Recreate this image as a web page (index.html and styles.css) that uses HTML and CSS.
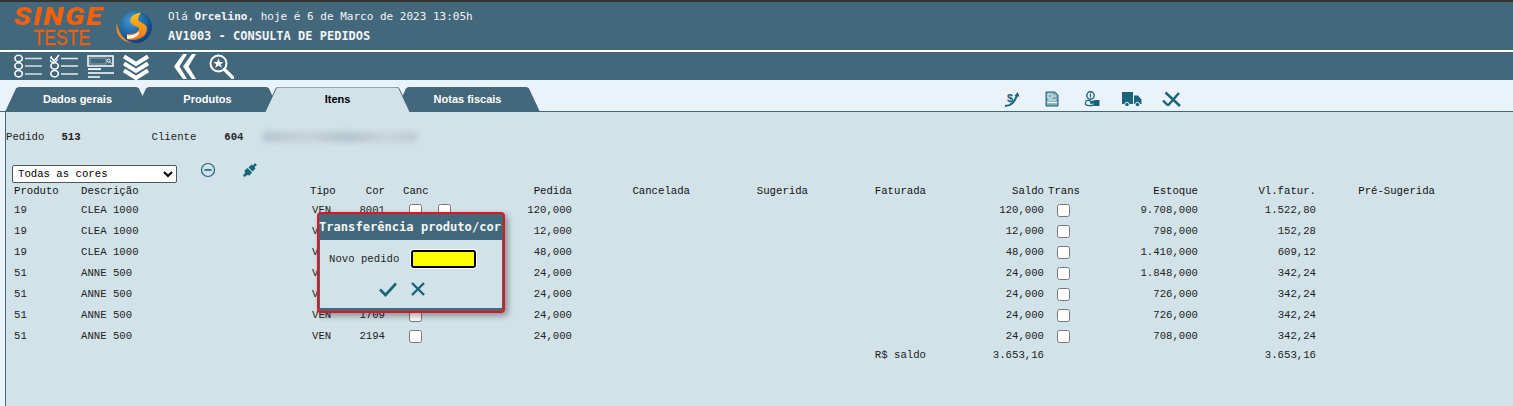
FILE: index.html
```html
<!DOCTYPE html>
<html lang="pt-BR">
<head>
    <meta charset="UTF-8">
    <title>AV1003 - Consulta de Pedidos</title>
    <link rel="stylesheet" href="styles.css">
</head>
<body>

    <header class="top-bar">
        <div class="brand">
            <span class="brand-name">SINGE</span>
            <span class="brand-env">TESTE</span>
        </div>
        <svg class="brand-ball" viewBox="0 0 38 32" width="38" height="32">
            <defs>
                <radialGradient id="ballBlue" cx="35%" cy="30%" r="75%">
                    <stop offset="0" stop-color="#3f9ad6"/>
                    <stop offset="1" stop-color="#0b3f78"/>
                </radialGradient>
                <linearGradient id="ballOrange" x1="0" y1="0" x2="0" y2="1">
                    <stop offset="0" stop-color="#ffc21a"/>
                    <stop offset="1" stop-color="#f0701a"/>
                </linearGradient>
            </defs>
            <circle cx="21" cy="16" r="16" fill="url(#ballBlue)"/>
            <path d="M2 12 C-1 22 6 31 17 32 C9 29 3 22 2 12Z" fill="#e8892a"/>
            <path d="M26 1.5 C19 2 13 7 16 12 C18 16 24 15 24 18 C24 22 18 23 12 23 L12 28 C22 31 32 26 32 18 C32 12 24 12 23 9 C23 6 25 3 26 1.5Z" fill="url(#ballOrange)"/>
            <path d="M12 24 C16 25 21 24 24 20 C25 24 20 28 12 28Z" fill="#f7f7f7"/>
        </svg>
        <div class="greeting">
            <p class="greeting-line">Olá <strong>Orcelino</strong>, hoje é 6 de Marco de 2023 13:05h</p>
            <p class="page-title">AV1003 - CONSULTA DE PEDIDOS</p>
        </div>
    </header>

    <nav class="toolbar">
        <svg class="tool" viewBox="0 0 28 25" width="28" height="25">
            <g fill="none" stroke="#fff" stroke-width="1.6">
                <ellipse cx="4.6" cy="4.5" rx="3.7" ry="3.2"/>
                <ellipse cx="4.6" cy="12" rx="3.7" ry="3.2"/>
                <ellipse cx="4.6" cy="19.7" rx="3.7" ry="3.2"/>
            </g>
            <path d="M11 4.5H28M11 12H28M11 20H28" stroke="#d5dde1" stroke-width="1.3"/>
        </svg>
        <svg class="tool tool-checks" viewBox="0 0 28 25" width="28" height="25">
            <g fill="none" stroke="#fff" stroke-width="1.6">
                <path d="M1 3 L4 7 L9 1" stroke-width="1.5"/>
                <path d="M7 4.5 A3.7 3 0 1 1 2 2.5" stroke-width="1.2"/>
                <ellipse cx="4.6" cy="12" rx="3.7" ry="3.2"/>
                <ellipse cx="4.6" cy="19.7" rx="3.7" ry="3.2"/>
            </g>
            <path d="M11 4.5H28M11 12H28M11 20H28" stroke="#e4eaed" stroke-width="1.3"/>
        </svg>
        <svg class="tool" viewBox="0 0 27 25" width="27" height="25">
            <rect x="1" y="2" width="25" height="10" fill="none" stroke="#fff" stroke-width="1.5"/>
            <rect x="3" y="4" width="16" height="6" fill="#44687b" stroke="#b9c7ce" stroke-width=".6"/>
            <circle cx="21.5" cy="6.6" r="1.6" fill="none" stroke="#fff"/>
            <path d="M22.6 7.8L24.4 9.6" stroke="#fff"/>
            <path d="M1 15.2H14M1 19H27M1 23H13" stroke="#fff" stroke-width="1.7"/>
        </svg>
        <svg class="tool tool-chevrons" viewBox="0 0 26 26" width="26" height="26">
            <path d="M1 2.5L13 10L25 2.5M1 9.5L13 17L25 9.5M1 16.5L13 24L25 16.5" fill="none" stroke="#fff" stroke-width="4"/>
        </svg>
        <svg class="tool tool-back" viewBox="0 0 22 25" width="22" height="25">
            <path d="M9 0L0 12.5L9 25H13L5.5 12.5L13 0ZM18 0L9 12.5L18 25H22L14.5 12.5L22 0Z" fill="#fff"/>
        </svg>
        <svg class="tool tool-search" viewBox="0 0 25 25" width="25" height="25">
            <circle cx="9.5" cy="9.5" r="8" fill="none" stroke="#fff" stroke-width="2"/>
            <path d="M9.5 4.5L11 8H14.5L11.7 10.2L12.8 13.8L9.5 11.6L6.2 13.8L7.3 10.2L4.5 8H8Z" fill="#fff"/>
            <path d="M15.5 15.5L23.5 23.5" stroke="#fff" stroke-width="3.2" stroke-linecap="round"/>
        </svg>
    </nav>

    <div class="tab-bar">
        <div class="tabs">
            <a class="tab"><svg viewBox="0 0 145 25"><path d="M0 25L11 1.5Q12 0 14 0H131Q133 0 134 1.5L145 25"/></svg><span>Dados gerais</span></a>
            <a class="tab"><svg viewBox="0 0 145 25"><path d="M0 25L11 1.5Q12 0 14 0H131Q133 0 134 1.5L145 25"/></svg><span>Produtos</span></a>
            <a class="tab tab-active"><svg viewBox="0 0 145 25"><path d="M0 25L11 1.5Q12 0 14 0H131Q133 0 134 1.5L145 25"/></svg><span>Itens</span></a>
            <a class="tab"><svg viewBox="0 0 145 25"><path d="M0 25L11 1.5Q12 0 14 0H131Q133 0 134 1.5L145 25"/></svg><span>Notas fiscais</span></a>
        </div>
        <div class="tab-actions">
            <svg viewBox="0 0 20 20" width="20" height="20">
                <path d="M3 17C9 17 13 13 15 6" fill="none" stroke="#1a6478" stroke-width="2"/>
                <path d="M12.5 7L15.6 3L17.5 7.6Z" fill="#1a6478"/>
                <text x="5" y="13" class="money">$</text>
            </svg>
            <svg viewBox="0 0 20 20" width="20" height="20">
                <path d="M4 3H13L16 6V17H4Z" fill="#7fa9b6" stroke="#1a6478" stroke-width="1"/>
                <path d="M6 5H10V9H6ZM11 7H14M6 11H14" stroke="#e9f3f9" fill="none"/>
                <path d="M5 13.5H15" stroke="#e9f3f9" stroke-width="1.4"/>
            </svg>
            <svg viewBox="0 0 20 20" width="20" height="20">
                <circle cx="8.5" cy="6.5" r="3.7" fill="none" stroke="#1a6478" stroke-width="1.4"/>
                <path d="M8.5 4.5V8.5" stroke="#1a6478" stroke-width="1.2"/>
                <path d="M3.5 12.5C5 11 7 11 9 12.5H12V14H8M3.5 13V15.5C5 16.5 8 17 12 16" fill="none" stroke="#1a6478" stroke-width="1.3"/>
                <rect x="12" y="11" width="5.5" height="6" fill="#1a6478"/>
            </svg>
            <svg viewBox="0 0 20 20" width="20" height="20">
                <path d="M0 3H11V15H0ZM12 6.5H16L19.5 10.5V15H12Z" fill="#1a6478"/>
                <circle cx="5" cy="15.5" r="2.2" fill="#1a6478" stroke="#e9f3f9"/>
                <circle cx="15.5" cy="15.5" r="2.2" fill="#1a6478" stroke="#e9f3f9"/>
            </svg>
            <svg viewBox="0 0 20 20" width="20" height="20">
                <path d="M1 11.5L6 16.5M6 16.5L17 4M3.5 3.5L18 17" fill="none" stroke="#1a6478" stroke-width="2.4"/>
            </svg>
        </div>
    </div>

    <main class="content">
        <div class="order-info">
            <span class="info-label">Pedido</span>
            <strong class="info-order">513</strong>
            <span class="info-label info-client">Cliente</span>
            <strong class="info-code">604</strong>
            <span class="info-blur"></span>
        </div>

        <div class="filter-row">
            <select class="color-select">
                <option>Todas as cores</option>
            </select>
            <svg class="filter-icon" viewBox="0 0 16 16" width="16" height="16">
                <circle cx="8" cy="8" r="6.5" fill="none" stroke="#1a6478" stroke-width="1.2"/>
                <path d="M4.5 8H11.5" stroke="#1a6478" stroke-width="1.6"/>
            </svg>
            <svg class="filter-icon filter-plug" viewBox="0 0 16 16" width="16" height="16">
                <path d="M1 13.5L3 11L2.5 8.5L5.5 6L10 10.5L7.5 13.5L5 13L2.5 15ZM6.5 5.5L9.5 2.5L11 3.5L13 1L15 3L12.5 5L13.5 6.5L10.5 9.5Z" fill="#1a6478"/>
            </svg>
        </div>

        <table class="items">
            <colgroup>
                <col class="c-prod"><col class="c-desc"><col class="c-tipo"><col class="c-cor">
                <col class="c-canc"><col class="c-canc2"><col class="c-ped"><col class="c-num">
                <col class="c-num"><col class="c-num"><col class="c-num"><col class="c-trans">
                <col class="c-ped"><col class="c-num"><col class="c-pre">
            </colgroup>
            <thead>
                <tr>
                    <th>Produto</th><th>Descrição</th><th>Tipo</th><th class="num">Cor</th>
                    <th class="canc-head" colspan="2">Canc</th><th class="num">Pedida</th><th class="num">Cancelada</th>
                    <th class="num">Sugerida</th><th class="num">Faturada</th><th class="num">Saldo</th><th class="trans-head">Trans</th>
                    <th class="num">Estoque</th><th class="num">Vl.fatur.</th><th class="num">Pré-Sugerida</th>
                </tr>
            </thead>
            <tbody>
                <tr>
                    <td>19</td><td>CLEA 1000</td><td class="tipo">VEN</td><td class="num">8001</td>
                    <td class="check-a"><input type="checkbox"></td><td class="check-b"><input type="checkbox"></td>
                    <td class="num">120,000</td><td></td><td></td><td></td><td class="num">120,000</td>
                    <td class="check-t"><input type="checkbox"></td><td class="num">9.708,000</td><td class="num">1.522,80</td><td></td>
                </tr>
                <tr>
                    <td>19</td><td>CLEA 1000</td><td class="tipo">VEN</td><td></td>
                    <td></td><td></td>
                    <td class="num">12,000</td><td></td><td></td><td></td><td class="num">12,000</td>
                    <td class="check-t"><input type="checkbox"></td><td class="num">798,000</td><td class="num">152,28</td><td></td>
                </tr>
                <tr>
                    <td>19</td><td>CLEA 1000</td><td class="tipo">VEN</td><td></td>
                    <td></td><td></td>
                    <td class="num">48,000</td><td></td><td></td><td></td><td class="num">48,000</td>
                    <td class="check-t"><input type="checkbox"></td><td class="num">1.410,000</td><td class="num">609,12</td><td></td>
                </tr>
                <tr>
                    <td>51</td><td>ANNE 500</td><td class="tipo">VEN</td><td></td>
                    <td></td><td></td>
                    <td class="num">24,000</td><td></td><td></td><td></td><td class="num">24,000</td>
                    <td class="check-t"><input type="checkbox"></td><td class="num">1.848,000</td><td class="num">342,24</td><td></td>
                </tr>
                <tr>
                    <td>51</td><td>ANNE 500</td><td class="tipo">VEN</td><td></td>
                    <td></td><td></td>
                    <td class="num">24,000</td><td></td><td></td><td></td><td class="num">24,000</td>
                    <td class="check-t"><input type="checkbox"></td><td class="num">726,000</td><td class="num">342,24</td><td></td>
                </tr>
                <tr>
                    <td>51</td><td>ANNE 500</td><td class="tipo">VEN</td><td class="num">1709</td>
                    <td class="check-a"><input type="checkbox"></td><td></td>
                    <td class="num">24,000</td><td></td><td></td><td></td><td class="num">24,000</td>
                    <td class="check-t"><input type="checkbox"></td><td class="num">726,000</td><td class="num">342,24</td><td></td>
                </tr>
                <tr>
                    <td>51</td><td>ANNE 500</td><td class="tipo">VEN</td><td class="num">2194</td>
                    <td class="check-a"><input type="checkbox"></td><td></td>
                    <td class="num">24,000</td><td></td><td></td><td></td><td class="num">24,000</td>
                    <td class="check-t"><input type="checkbox"></td><td class="num">708,000</td><td class="num">342,24</td><td></td>
                </tr>
                <tr class="total-row">
                    <td colspan="9"></td><td class="num">R$ saldo</td><td class="num">3.653,16</td>
                    <td></td><td></td><td class="num">3.653,16</td><td></td>
                </tr>
            </tbody>
        </table>

        <!-- Transfer dialog -->
        <div class="dialog">
            <div class="dialog-title">Transferência produto/cor</div>
            <div class="dialog-field">
                <label for="novoPedido">Novo pedido</label>
                <span class="field-box"><input type="text" id="novoPedido"></span>
            </div>
            <div class="dialog-actions">
                <svg viewBox="0 0 20 20" width="20" height="20">
                    <path d="M2 10.5L7.5 16L18 4.5" fill="none" stroke="#1a6478" stroke-width="2.6"/>
                </svg>
                <svg viewBox="0 0 20 20" width="20" height="20">
                    <path d="M4 4L16 16M16 4L4 16" fill="none" stroke="#1a6478" stroke-width="2.4"/>
                </svg>
            </div>
        </div>
    </main>

</body>
</html>
```

FILE: styles.css
```css
html, body {
    height: 100%;
}

body {
    margin: 0;
    display: flex;
    flex-direction: column;
    overflow: hidden;
    background-color: #e9f3f9;
    font-family: "Liberation Mono", monospace;
    font-size: 10.67px;
    color: #222;
}

/* Top bar */
.top-bar {
    display: flex;
    align-items: flex-start;
    height: 48px;
    border-top: 2px solid #333;
    border-bottom: 2px solid #fff;
    background-color: #44687b;
    flex-shrink: 0;
}

.brand {
    width: 101px;
    margin-left: 14px;
    display: flex;
    flex-direction: column;
    align-items: flex-start;
    color: #f4600c;
    font-family: Roboto, sans-serif;
}

.brand-name {
    margin-top: 4px;
    font-size: 25px;
    line-height: 22px;
    font-weight: 900;
    font-style: italic;
    letter-spacing: 1.5px;
    transform: scaleX(1.17);
    transform-origin: left;
}

.brand-env {
    margin: 1px 0 0 20px;
    font-size: 22px;
    line-height: 18px;
    font-family: "Liberation Sans", sans-serif;
    -webkit-text-stroke: 0.4px #f4600c;
    transform: scaleX(.8);
    transform-origin: left;
}

.brand-ball {
    margin-top: 9px;
    flex-shrink: 0;
}

.greeting {
    margin-left: 15px;
    color: #f2f5f6;
    font-family: "DejaVu Sans Mono", monospace;
}

.greeting p {
    margin: 0;
}

.greeting-line {
    margin-top: 7px !important;
    height: 19px;
    line-height: 16px;
    font-size: 11px;
}

.page-title {
    line-height: 16px;
    font-size: 12px;
    font-weight: bold;
}

/* Toolbar */
.toolbar {
    display: flex;
    align-items: flex-start;
    gap: 8px;
    height: 28px;
    padding: 2px 0 0 14px;
    box-sizing: border-box;
    background-color: #44687b;
    flex-shrink: 0;
}

.tool-checks {
    margin-right: 1px;
}

.tool-chevrons {
    margin-left: 1px;
}

.tool-back {
    margin-left: 17px;
}

.tool-search {
    margin-left: 5px;
}

/* Tabs */
.tab-bar {
    display: flex;
    align-items: flex-end;
    height: 32px;
    box-sizing: border-box;
    padding-left: 5px;
    border-bottom: 1px solid #44687b;
    flex-shrink: 0;
}

.tabs {
    display: flex;
    margin-bottom: -1px;
}

.tab {
    position: relative;
    width: 145px;
    height: 25px;
    margin-right: -15px;
    font-family: "Liberation Sans", sans-serif;
    font-size: 11px;
    font-weight: bold;
    line-height: 25px;
    text-align: center;
    color: #fff;
}

.tab svg {
    position: absolute;
    left: 0;
    top: 0;
    width: 145px;
    height: 25px;
    fill: #44687b;
}

.tab span {
    position: relative;
}

.tab-active {
    z-index: 1;
    color: #000;
}

.tab-active svg {
    fill: #d2e2e9;
    stroke: #44687b;
    stroke-width: 1;
}

.tab-actions {
    display: flex;
    gap: 20px;
    margin-left: 477px;
    margin-bottom: 1px;
    padding-bottom: 1px;
}

.money {
    font-family: "Liberation Sans", sans-serif;
    font-size: 11px;
    font-weight: bold;
    fill: #1a6478;
}

/* Main area */
.content {
    position: relative;
    flex: 1;
    margin-left: 5px;
    border-left: 1px solid #44687b;
    background-color: #d2e2e9;
}

.order-info {
    display: flex;
    align-items: center;
    height: 16px;
    margin-top: 17px;
}

.info-order {
    margin-left: 17px;
    font-weight: bold;
}

.info-client {
    margin-left: 71px;
}

.info-code {
    margin-left: 28px;
    font-weight: bold;
}

.info-blur {
    width: 154px;
    height: 10px;
    margin-left: 19px;
    background: linear-gradient(90deg, #b4c3cb, #c4d2d9 30%, #b2c1c9 55%, #c6d4db 80%, #bccad1);
    filter: blur(3px);
}

.filter-row {
    display: flex;
    align-items: flex-start;
    margin-top: 20px;
    padding-left: 6px;
    height: 18px;
}

.color-select {
    width: 165px;
    height: 18px;
    padding: 0 0 0 1px;
    font-family: "Liberation Mono", monospace;
    font-size: 10.67px;
    background-color: #fff;
    border: 1px solid #555;
    border-radius: 2px;
}

.filter-icon {
    margin: -3px 0 0 23px;
}

.filter-plug {
    margin-left: 26px;
}

/* Items table */
.items {
    table-layout: fixed;
    width: 1421px;
    margin-left: 8px;
    border-collapse: collapse;
}

.items th,
.items td {
    padding: 0;
    overflow: visible;
    white-space: nowrap;
    text-align: left;
    height: 21px;
    font-weight: normal;
}

.items th {
    height: 16px;
    color: #111;
}

.items .num {
    text-align: right;
}

.items .tipo {
    padding-left: 2px;
}

.items input[type="checkbox"] {
    display: block;
    margin: 2px 0 0 0;
}

.items .check-a input {
    margin-left: 24px;
}

.items .check-b input {
    margin-left: 8px;
}

.items .check-t input {
    margin-left: 13px;
}

.items .canc-head {
    padding-left: 18px;
}

.items .trans-head {
    padding-left: 4px;
}

.items .total-row td {
    height: 18px;
}

.c-prod { width: 67px; }
.c-desc { width: 229px; }
.c-tipo { width: 49px; }
.c-cor { width: 26px; }
.c-canc { width: 45px; }
.c-canc2 { width: 28px; }
.c-ped { width: 114px; }
.c-num { width: 118px; }
.c-trans { width: 40px; }
.c-pre { width: 119px; }

/* Transfer dialog */
.dialog {
    position: absolute;
    left: 311px;
    top: 100px;
    width: 188px;
    height: 101px;
    box-sizing: border-box;
    border: 2px solid #e0151d;
    border-radius: 4px;
    background-color: #d2e2e9;
    box-shadow: 3px 3px 6px rgba(0, 0, 0, 0.35), inset 0 -3px 0 #44687b, inset 0 0 0 1px #44687b;
}

.dialog-title {
    height: 26px;
    background-color: #44687b;
    color: #f2f5f6;
    font-family: "DejaVu Sans Mono", monospace;
    font-size: 12.1px;
    font-weight: bold;
    line-height: 27px;
    white-space: nowrap;
    overflow: hidden;
}

.dialog-field {
    display: flex;
    align-items: center;
    margin-top: 10px;
    padding-left: 10px;
}

.dialog-field label {
    width: 82px;
}

.field-box {
    display: block;
    width: 65px;
    height: 18px;
    box-sizing: border-box;
    border: 2px solid #000;
    border-radius: 3px;
    box-shadow: 0 0 0 1px #fff;
}

.field-box input {
    display: block;
    width: 100%;
    height: 100%;
    box-sizing: border-box;
    border: 0;
    padding: 0;
    background-color: #ff0;
}

.dialog-actions {
    display: flex;
    justify-content: center;
    gap: 10px;
    margin-top: 11px;
    padding-right: 16px;
}
```
